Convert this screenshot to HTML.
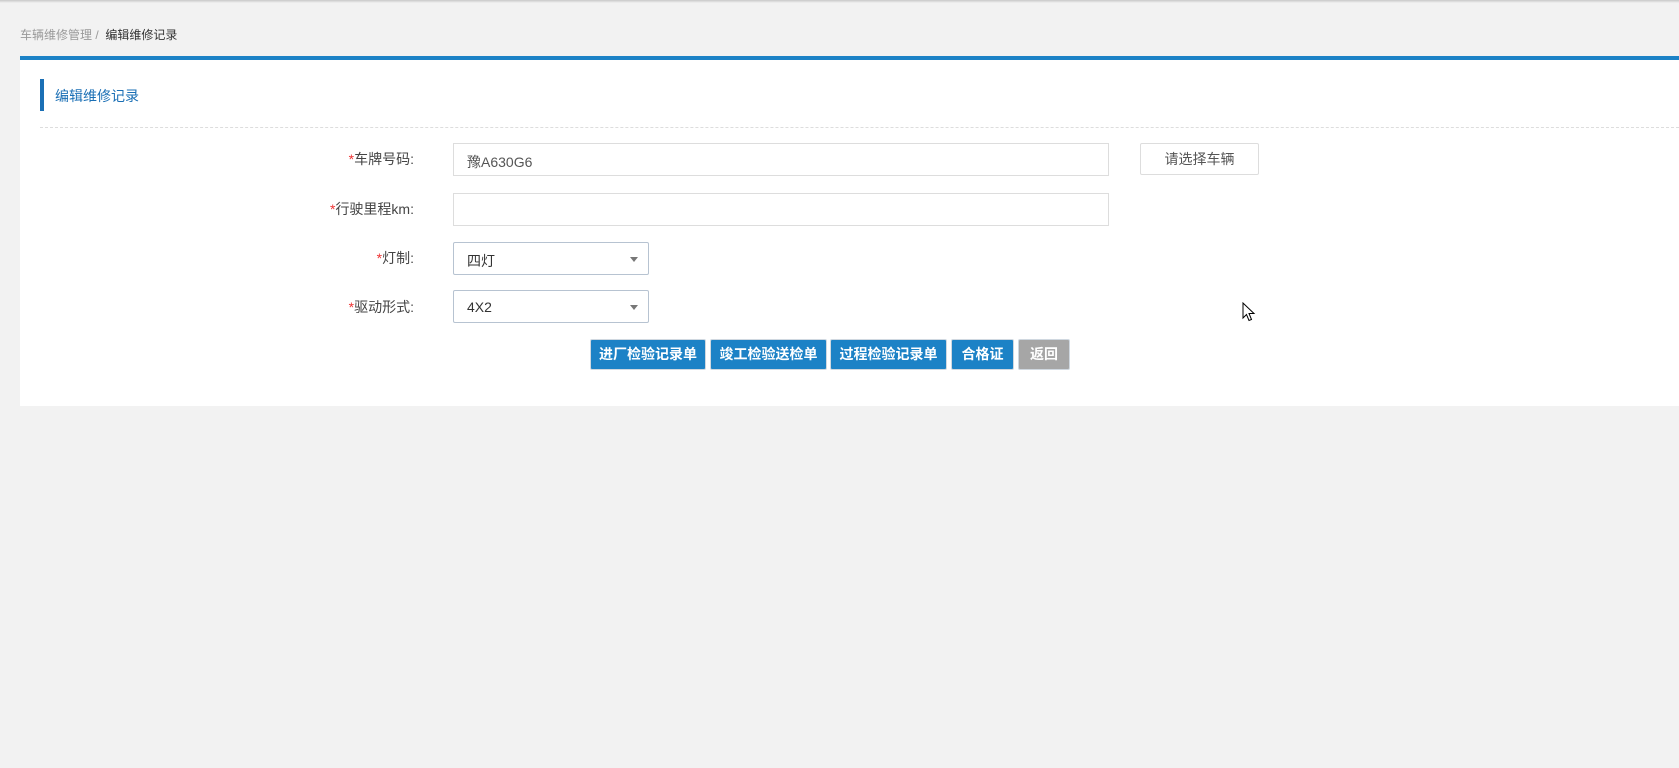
<!DOCTYPE html>
<html><head><meta charset="utf-8"><style>
*{margin:0;padding:0;box-sizing:border-box}
body{width:1679px;height:768px;background:#f2f2f2;font-family:"Liberation Sans","Noto Sans CJK SC",sans-serif;position:relative;overflow:hidden;font-size:14px;color:#333}
.top{position:absolute;left:0;top:0;width:100%;height:3px;background:linear-gradient(#c8c8c8,#f2f2f2)}
.bc{position:absolute;left:20px;top:26px;font-size:12px;color:#999}
.bc b{font-weight:normal;color:#333}
.panel{position:absolute;left:20px;top:56px;right:0;height:350px;background:#fff;border-top:4px solid #1c82c6}
.tbar{position:absolute;left:40px;top:79px;width:4px;height:32px;background:#1a6fb5}
.ttl{position:absolute;left:55px;top:86px;font-size:14px;color:#1a6fb5}
.dash{position:absolute;left:40px;right:0;top:127px;border-top:1px dashed #ddd}
.lbl{position:absolute;width:300px;left:114px;text-align:right;font-size:14px;color:#444}
.lbl i{color:#e33;font-style:normal}
.inp{position:absolute;left:453px;border:1px solid #ddd;height:33px;font-size:14px;padding:8px 13px;color:#555}
.sel{position:absolute;left:453px;width:196px;height:33px;border:1px solid #b7c3d1;border-radius:2px;padding:8px 13px;font-size:14px;color:#333}
.sel:after{content:"";position:absolute;right:10px;top:14px;border:4px solid transparent;border-top:5px solid #777}
.b{position:absolute;top:339px;height:31px;background:#1c82c6;color:#fff;border-radius:2px;font-size:14px;font-weight:bold;text-align:center;line-height:29px;border:1px solid #d0d8e0}
</style></head><body>
<div class="top"></div>
<div class="bc">车辆维修管理 / &nbsp;<b>编辑维修记录</b></div>
<div class="panel"></div>
<div class="tbar"></div>
<div class="ttl">编辑维修记录</div>
<div class="dash"></div>
<div class="lbl" style="top:149px"><i>*</i>车牌号码:</div>
<div class="inp" style="top:143px;width:656px">豫A630G6</div>
<div style="position:absolute;left:1140px;top:143px;width:119px;height:32px;border:1px solid #ddd;border-radius:2px;text-align:center;line-height:30px;font-size:14px;color:#555">请选择车辆</div>
<div class="lbl" style="top:199px"><i>*</i>行驶里程km:</div>
<div class="inp" style="top:193px;width:656px"></div>
<div class="lbl" style="top:248px"><i>*</i>灯制:</div>
<div class="sel" style="top:242px">四灯</div>
<div class="lbl" style="top:297px"><i>*</i>驱动形式:</div>
<div class="sel" style="top:290px">4X2</div>
<div class="b" style="left:590px;width:116px">进厂检验记录单</div>
<div class="b" style="left:710px;width:117px">竣工检验送检单</div>
<div class="b" style="left:830px;width:117px">过程检验记录单</div>
<div class="b" style="left:951px;width:63px">合格证</div>
<div class="b" style="left:1018px;width:52px;background:#a6a6a6">返回</div>
<svg style="position:absolute;left:1242px;top:302px" width="14" height="20" viewBox="0 0 14 20"><path d="M1 1 L1 16 L4.5 12.5 L7 18.5 L9.5 17.5 L7 11.5 L12 11.5 Z" fill="#fff" stroke="#000" stroke-width="1"/></svg>
</body></html>
